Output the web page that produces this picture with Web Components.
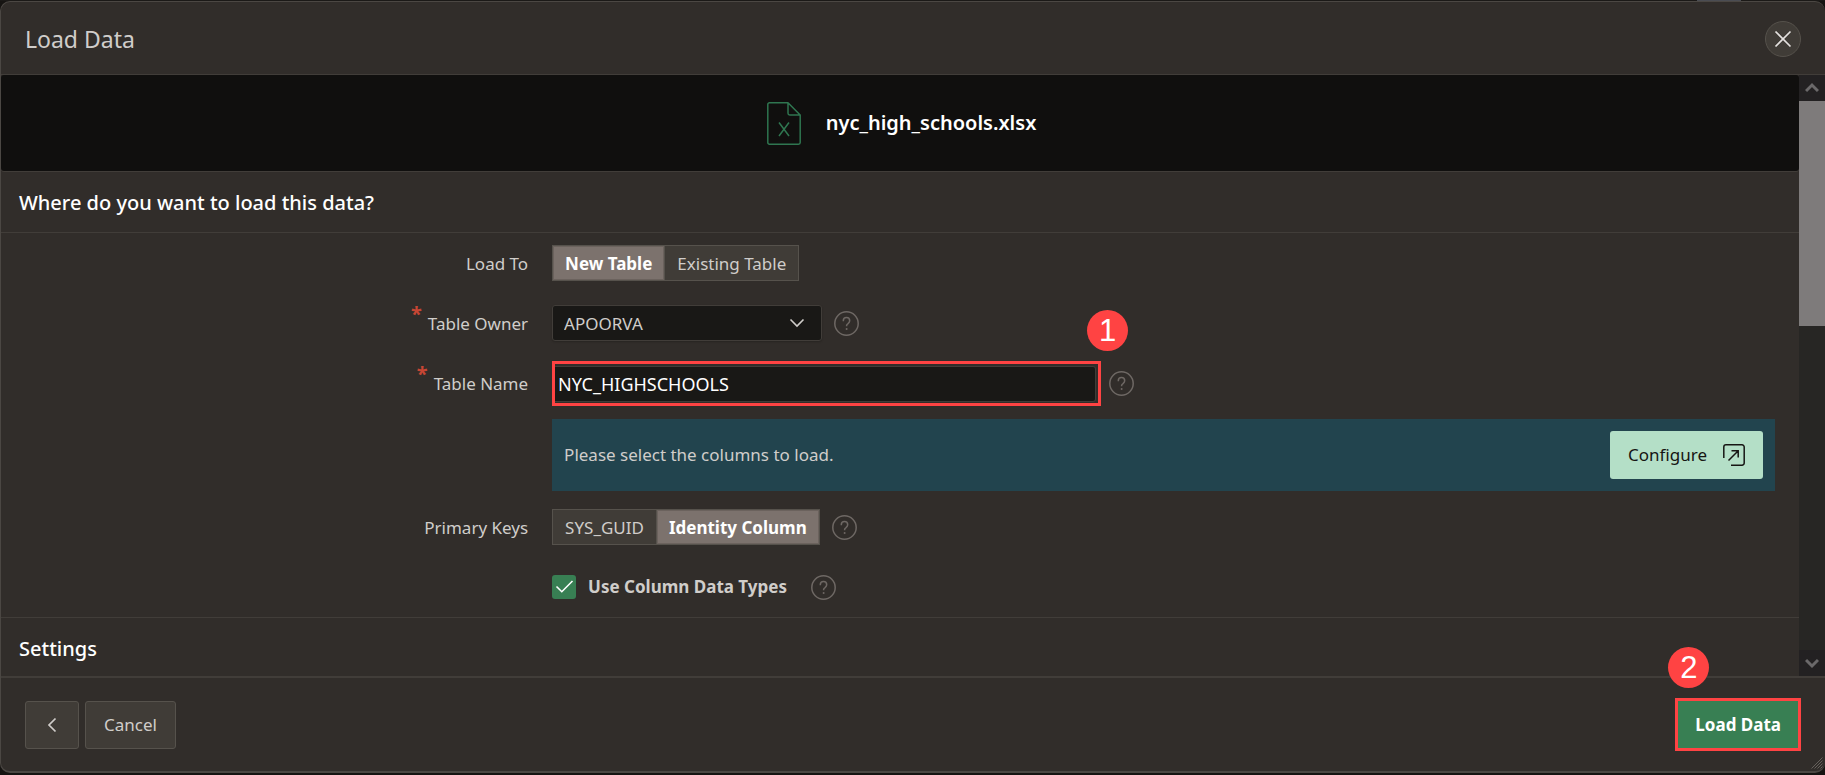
<!DOCTYPE html>
<html lang="en">
<head>
<meta charset="utf-8">
<title>Load Data</title>
<style>
  html, body { margin: 0; height: 100%; }
  body {
    background: linear-gradient(90deg, #1b1917 93%, #4a4c52 93%, #4a4c52 95.4%, #1b1917 95.4%) top / 100% 1px no-repeat, #161412;
    font: 17px/24px "Noto Sans", "Open Sans", sans-serif;
    color: #d0cdca;
    --surface: #312d2a;
    --line: #413d39;
    --line-strong: #56524c;
    --raised: #403c37;
    --field: #191816;
    --muted: #6e6864;
    --green: #387f53;
    --mark: #ff4343;
  }
</style>
</head>
<body>
<load-dialog heading="Load Data">
  <file-banner slot="body" name="nyc_high_schools.xlsx"></file-banner>
  <form-section slot="body" heading="Where do you want to load this data?">
    <form-row label="Load To">
      <seg-control name="load-to" label="Load To" options="New Table|Existing Table" selected="0"></seg-control>
    </form-row>
    <form-row label="Table Owner" required>
      <select-field label="Table Owner" options="APOORVA"></select-field>
      <help-button topic="Table Owner"></help-button>
    </form-row>
    <form-row label="Table Name" required class="tight">
      <text-field label="Table Name" value="NYC_HIGHSCHOOLS"><step-badge>1</step-badge></text-field>
      <help-button topic="Table Name"></help-button>
    </form-row>
    <form-row class="notice">
      <info-banner action="Configure">Please select the columns to load.</info-banner>
    </form-row>
    <form-row label="Primary Keys">
      <seg-control name="primary-keys" label="Primary Keys" options="SYS_GUID|Identity Column" selected="1"></seg-control>
      <help-button topic="Primary Keys"></help-button>
    </form-row>
    <form-row class="wide">
      <check-field>Use Column Data Types</check-field>
      <help-button topic="Use Column Data Types"></help-button>
    </form-row>
  </form-section>
  <form-section slot="body" heading="Settings"></form-section>
  <dialog-footer slot="footer"></dialog-footer>
</load-dialog>

<script>
const define = (tag, render) => customElements.define(tag, class extends HTMLElement {
  connectedCallback() {
    if (this.shadowRoot) return;
    this.attachShadow({ mode: 'open' }).innerHTML = render(this);
  }
});
const attr = (el, name) => el.getAttribute(name) || '';

define('step-badge', () => `
  <style>
    :host {
      position: absolute; z-index: 2; width: 41px; height: 41px; border-radius: 50%;
      background: var(--mark); color: #fff; display: grid; place-items: center;
      font: 31px/41px "Liberation Sans", Arial, sans-serif;
    }
  </style><slot></slot>`);

define('help-button', el => `
  <style>
    :host { display: block; flex: none; }
    button { display: block; padding: 0; border: 0; background: none; color: var(--muted); cursor: pointer; }
    svg { display: block; }
  </style>
  <button type="button" aria-label="Help: ${attr(el, 'topic')}">
    <svg width="25" height="25" viewBox="0 0 25 25" fill="none" stroke="currentColor" stroke-width="1.5">
      <circle cx="12.5" cy="12.5" r="11.7"/>
      <path d="M9.3 10.2V9.8a3.2 3.2 0 0 1 6.4 0c0 1.5-.8 2.1-1.7 2.8-.9.6-1.4 1.1-1.4 2.2v.5"/>
      <circle cx="12.6" cy="18" r="1" fill="currentColor" stroke="none"/>
    </svg>
  </button>`);

define('seg-control', el => `
  <style>
    :host { display: block; }
    fieldset {
      display: flex; margin: 0; padding: 0; border: 1px solid var(--line-strong);
      height: 34px; min-width: 0; background: var(--raised);
    }
    label { display: flex; align-items: center; padding: 1px 12px 0; position: relative; white-space: nowrap; cursor: pointer; }
    label:has(:checked) { background: #7c726d; color: #fff; font-weight: 700; box-shadow: inset 0 0 0 1px #6b625d; }
    label + label { border-left: 1px solid var(--line-strong); }
    input { position: absolute; inset: 0; margin: 0; opacity: 0; }
  </style>
  <fieldset aria-label="${attr(el, 'label')}">
    ${attr(el, 'options').split('|').map((o, i) => `<label><input type="radio" name="${attr(el, 'name')}" ${String(i) === attr(el, 'selected') ? 'checked' : ''}>${o}</label>`).join('')}
  </fieldset>`);

define('select-field', el => `
  <style>
    :host { display: grid; width: 270px; align-items: center; }
    select, svg { grid-area: 1 / 1; }
    select {
      appearance: none; width: 100%; height: 36px; padding: 1px 40px 0 11px; box-sizing: border-box;
      border: 1px solid var(--line); border-radius: 3px; background: var(--field);
      color: inherit; font: inherit; box-shadow: 0 1px 2px #0003;
    }
    svg { justify-self: end; margin-right: 17px; pointer-events: none; }
  </style>
  <select aria-label="${attr(el, 'label')}">${attr(el, 'options').split('|').map(o => `<option>${o}</option>`).join('')}</select>
  <svg width="16" height="16" viewBox="0 0 16 16" fill="none" stroke="currentColor" stroke-width="1.6"><path d="M1.5 4.5 8 11l6.5-6.5"/></svg>`);

define('text-field', el => `
  <style>
    :host {
      display: block; position: relative; flex: 0 1 549px; box-sizing: border-box;
      border: 3px solid var(--mark); padding: 2px 2px 1px 0;
    }
    input {
      display: block; width: 100%; height: 36px; box-sizing: border-box; margin: 0; padding: 0 3px;
      border: 1px solid var(--line); border-left: 0; border-radius: 0 3px 3px 0;
      background: var(--field); color: #fff; font: inherit; font-size: 18px;
    }
    ::slotted(step-badge) { right: -30px; top: -54px; }
  </style>
  <input type="text" aria-label="${attr(el, 'label')}" value="${attr(el, 'value')}"><slot></slot>`);

define('check-field', () => `
  <style>
    :host { display: block; }
    label { display: flex; align-items: center; gap: 12px; font-weight: 700; cursor: pointer; }
    span { display: grid; }
    input, svg { grid-area: 1 / 1; }
    input { appearance: none; margin: 0; width: 24px; height: 24px; border-radius: 3px; background: var(--raised); }
    input:checked { background: var(--green); }
    svg { pointer-events: none; }
  </style>
  <label><span><input type="checkbox" checked>
    <svg width="24" height="24" viewBox="0 0 24 24" fill="none" stroke="#fff" stroke-width="1.6"><path d="m4.5 11.5 5.3 5.2L20.5 6"/></svg></span><slot></slot></label>`);

define('info-banner', el => `
  <style>
    :host {
      display: flex; flex: 1; align-items: center; justify-content: space-between;
      gap: 12px; padding: 12px; background: #22444e;
    }
    button {
      display: flex; align-items: center; gap: 16px; height: 48px; padding: 0 18px; border: 0; border-radius: 3px;
      background: #b4dfc7; color: #161513; font: inherit; cursor: pointer;
    }
  </style>
  <span><slot></slot></span>
  <button type="button">${attr(el, 'action')}
    <svg width="22" height="22" viewBox="0 0 22 22" fill="none" stroke="currentColor" stroke-width="1.5">
      <path d="M.8 14V3A2.2 2.2 0 0 1 3 .8h16A2.2 2.2 0 0 1 21.2 3v16a2.2 2.2 0 0 1-2.2 2.2H8M5.500 16.500 15 7M8.500 6.800H15.200V13.500"/>
    </svg>
  </button>`);

define('form-row', el => `
  <style>
    :host { display: grid; grid-template-columns: 30% minmax(0, 1fr); align-items: center; min-height: 60px; }
    :host(.notice) { padding: 6px 0; }
    .label { display: flex; justify-content: flex-end; padding: 2px 24px 0 0; }
    i { font: 700 20px/20px "Noto Sans", sans-serif; color: #c74634; margin: -8px 6px 0 0; height: 20px; }
    .control { display: flex; align-items: center; gap: 12px; }
    :host(.tight) .control { gap: 8px; }
    :host(.wide) .control { gap: 24px; }
  </style>
  <div class="label">${el.hasAttribute('required') ? '<i aria-hidden="true">*</i>' : ''}<span>${attr(el, 'label')}</span></div>
  <div class="control"><slot></slot></div>`);

define('form-section', el => `
  <style>
    :host { display: block; border-bottom: 1px solid var(--line); }
    h2 { margin: 0; padding: 16px 18px 14px; font-size: 20px; line-height: 30px; font-weight: 500; color: #fff; }
    div { padding: 0 24px 0 27px; border-top: 1px solid var(--line); }
    :host(:last-of-type) { border-bottom: 0; }
  </style>
  <h2>${attr(el, 'heading')}</h2>${el.children.length ? '<div><slot></slot></div>' : ''}`);

define('file-banner', el => `
  <style>
    :host {
      display: flex; align-items: center; justify-content: center; gap: 25px; height: 96px; padding-left: 3px;
      background: #100f0e; border-radius: 3px; color: #fff; font-size: 20px; font-weight: 600;
      box-shadow: 0 1px var(--line); margin-bottom: 1px;
    }
  </style>
  <svg width="34" height="43" viewBox="0 0 34 43" fill="none" stroke="#2f7650" stroke-width="1.5" stroke-linejoin="round">
    <path d="M21 .8H2.500A1.700 1.700 0 0 0 .8 2.500v38a1.700 1.700 0 0 0 1.700 1.700h29a1.700 1.700 0 0 0 1.700-1.700V13L21 .8v10.500A1.700 1.700 0 0 0 22.700 13h10.500M12 20.500l10 13.500M22 20.500 12 34"/>
  </svg>
  <span>${attr(el, 'name')}</span>`);

define('scroll-rail', () => `
  <style>
    :host { display: flex; flex-direction: column; width: 26px; flex: none; background: #272624; }
    button { display: grid; place-items: center; height: 26px; padding: 0; border: 0; background: #232122; color: #6b696a; }
    .track { flex: 1; }
    .thumb { height: 41%; background: #7e7b7b; }
  </style>
  <button type="button" aria-label="Scroll up"><svg width="14" height="12" viewBox="0 0 14 12" fill="none" stroke="currentColor" stroke-width="3"><path d="M1 9 7 3l6 6"/></svg></button>
  <div class="track"><div class="thumb"></div></div>
  <button type="button" aria-label="Scroll down"><svg width="14" height="12" viewBox="0 0 14 12" fill="none" stroke="currentColor" stroke-width="3"><path d="M1 3l6 6 6-6"/></svg></button>`);

define('dialog-footer', () => `
  <style>
    :host {
      display: flex; align-items: center; gap: 6px; padding: 20px 24px 20px; position: relative;
      border-top: 2px solid var(--line);
    }
    button {
      display: grid; place-items: center; height: 48px; padding: 0 18px; border: 1px solid var(--line-strong);
      border-radius: 3px; background: var(--raised); color: inherit; font: inherit; cursor: pointer;
    }
    .back { width: 54px; padding: 0; }
    .primary { position: relative; margin-left: auto; }
    .primary button {
      height: 53px; padding: 0 17px; border: 3px solid var(--mark); border-radius: 0;
      background: var(--green); color: #fff; font-weight: 700;
    }
    step-badge { left: -7px; top: -51px; }
    .grip { position: absolute; right: 2px; bottom: 2px; color: #65605b; }
  </style>
  <button class="back" type="button" aria-label="Back"><svg width="16" height="16" viewBox="0 0 16 16" fill="none" stroke="currentColor" stroke-width="1.7"><path d="M11.500 1.500 5 8l6.500 6.500"/></svg></button>
  <button type="button">Cancel</button>
  <div class="primary"><button type="button">Load Data</button><step-badge>2</step-badge></div>
  <svg class="grip" width="12" height="12" viewBox="0 0 12 12" fill="none" stroke="currentColor" stroke-width="1"><path d="M.5 11.500l11-11M3.500 11.500l8-8M6.500 11.500l5-5M9.500 11.500l2-2"/></svg>`);

define('load-dialog', el => `
  <style>
    :host {
      display: flex; flex-direction: column; box-sizing: border-box; height: calc(100vh - 3px);
      border: 1px solid #4b4743; border-width: 1px 0 2px 1px; border-radius: 10px; background: var(--surface);
      position: relative; top: 1px; overflow: hidden;
    }
    header {
      display: flex; align-items: center; justify-content: space-between; height: 71px; padding: 1px 24px 0;
      border-bottom: 1px solid var(--line);
    }
    h1 { margin: 0; font-size: 23px; line-height: 32px; font-weight: 400; }
    header button {
      display: grid; place-items: center; width: 36px; height: 36px; padding: 0; border-radius: 50%;
      border: 1px solid var(--line-strong); background: var(--raised); color: #e4e1df; cursor: pointer;
    }
    main { display: flex; flex: 1; min-height: 0; }
    .content { flex: 1; min-width: 0; overflow: auto; scrollbar-width: none; }
  </style>
  <header><h1>${attr(el, 'heading')}</h1>
    <button type="button" aria-label="Close"><svg width="18" height="18" viewBox="0 0 18 18" fill="none" stroke="currentColor" stroke-width="1.7"><path d="m1.500 1.500 15 15M16.500 1.500l-15 15"/></svg></button>
  </header>
  <main><div class="content"><slot name="body"></slot></div><scroll-rail></scroll-rail></main>
  <slot name="footer"></slot>`);
</script>
</body>
</html>
